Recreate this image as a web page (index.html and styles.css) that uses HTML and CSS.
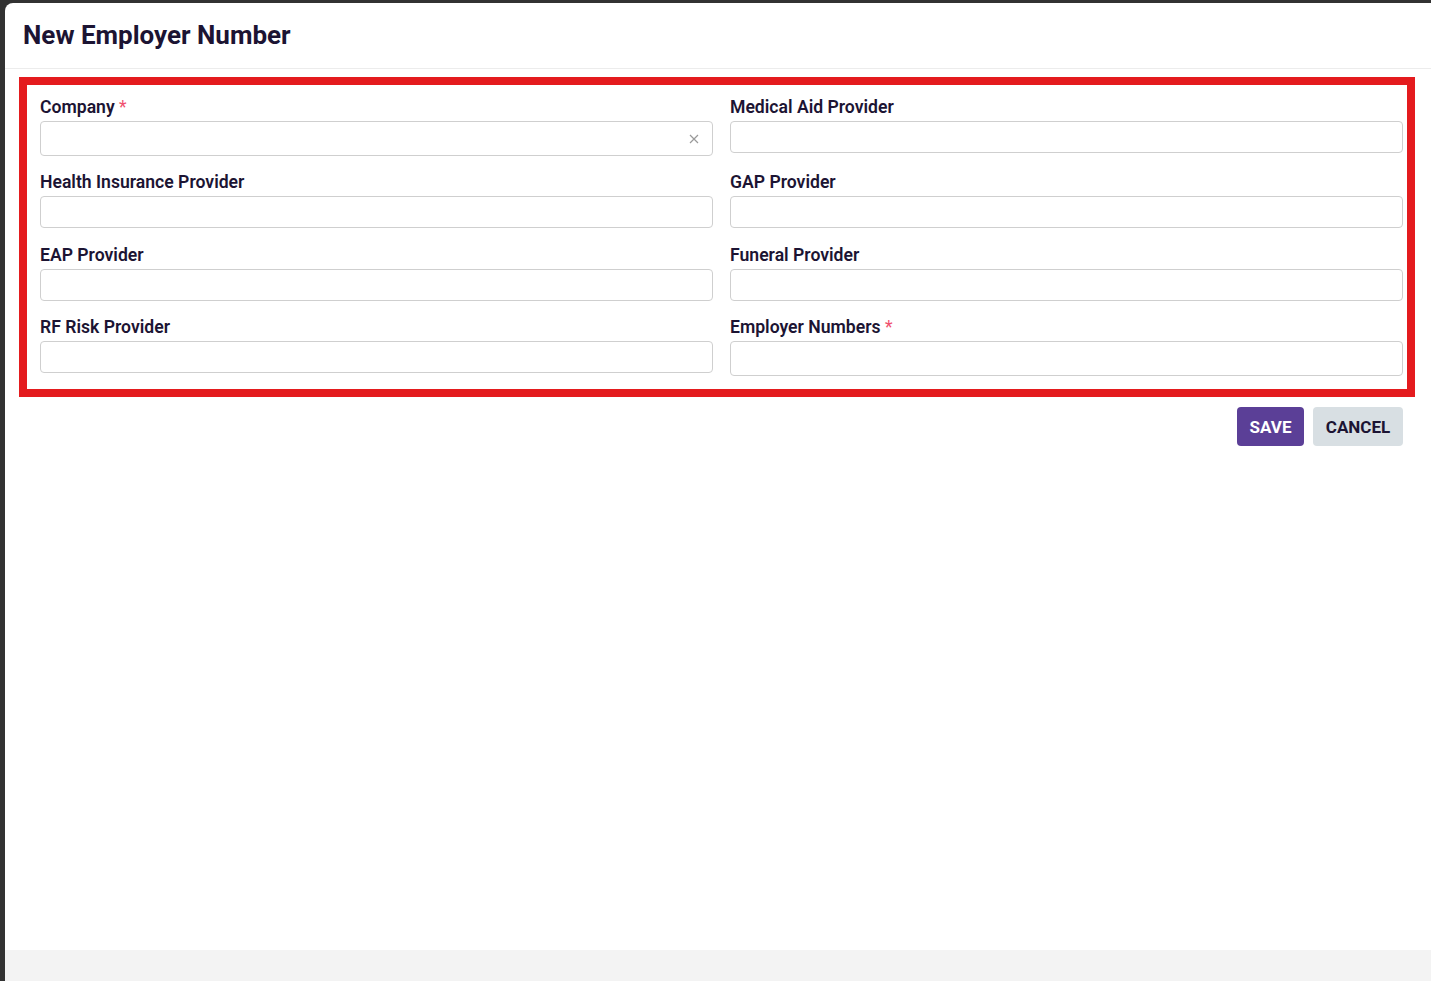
FILE: index.html
```html
<!DOCTYPE html>
<html>
<head>
<meta charset="utf-8">
<link rel="stylesheet" href="styles.css">
</head>
<body>
<div class="dialog">
  <div class="dialog-header">
    <h1 class="title">New Employer Number</h1>
  </div>
  <div class="dialog-body">
    <div class="highlight">
      <div class="form-grid">
        <div class="field">
          <label class="label">Company <span class="req">*</span></label>
          <div class="input select">
            <svg class="clear" width="10" height="10" viewBox="0 0 10 10"><path d="M1 1L9 9M9 1L1 9" stroke="#9a9a9a" stroke-width="1.2" fill="none"/></svg>
          </div>
        </div>
        <div class="field">
          <label class="label">Medical Aid Provider</label>
          <div class="input"></div>
        </div>
        <div class="field">
          <label class="label">Health Insurance Provider</label>
          <div class="input"></div>
        </div>
        <div class="field">
          <label class="label">GAP Provider</label>
          <div class="input"></div>
        </div>
        <div class="field row-3">
          <label class="label">EAP Provider</label>
          <div class="input"></div>
        </div>
        <div class="field row-3">
          <label class="label">Funeral Provider</label>
          <div class="input"></div>
        </div>
        <div class="field">
          <label class="label">RF Risk Provider</label>
          <div class="input"></div>
        </div>
        <div class="field">
          <label class="label">Employer Numbers <span class="req">*</span></label>
          <div class="input tall"></div>
        </div>
      </div>
    </div>
    <div class="actions">
      <button class="btn btn-save">SAVE</button>
      <button class="btn btn-cancel">CANCEL</button>
    </div>
  </div>
  <div class="dialog-footer"></div>
</div>
</body>
</html>
```
FILE: styles.css
```css
* { box-sizing: border-box; }
html, body {
  margin: 0;
  padding: 0;
  height: 100%;
  overflow: hidden;
}
body {
  background: #323232;
  font-family: Roboto, "Liberation Sans", Arial, sans-serif;
  color: #1c1433;
}
.dialog {
  margin: 3px 0 0 5px;
  height: calc(100vh - 3px);
  width: 1426px;
  background: #fff;
  border-top-left-radius: 8px;
  display: flex;
  flex-direction: column;
}
.dialog-header {
  height: 66px;
  border-bottom: 1px solid #ececec;
  padding: 0 0 0 18px;
  display: flex;
  align-items: center;
}
.title {
  margin: 0;
  font-size: 26px;
  font-weight: 700;
  color: #1c1433;
  line-height: 30px;
  padding-bottom: 1px;
}
.dialog-body {
  flex: 1;
  padding: 8px 16px 0 14px;
}
.highlight {
  border: 8px solid #e41b1e;
  padding: 11px 4px 13px 13px;
}
.form-grid {
  display: grid;
  grid-template-columns: 1fr 1fr;
  column-gap: 17px;
  row-gap: 15px;
  align-items: start;
}
.field {
  display: flex;
  flex-direction: column;
}
.field.row-3 {
  padding-top: 1px;
}
.label {
  font-size: 17.6px;
  font-weight: 600;
  line-height: 23px;
  margin-bottom: 2px;
  color: #1c1433;
}
.req {
  color: #f0506e;
  font-weight: 400;
}
.input {
  height: 32px;
  border: 1px solid #cfcfcf;
  border-radius: 4px;
  background: #fff;
  position: relative;
}
.input.select, .input.tall {
  height: 35px;
}
.clear {
  position: absolute;
  right: 13px;
  top: 12px;
}
.actions {
  display: flex;
  justify-content: flex-end;
  gap: 9px;
  margin-top: 10px;
  padding-right: 12px;
}
.btn {
  height: 39px;
  border: none;
  border-radius: 4px;
  font-family: Roboto, "Liberation Sans", Arial, sans-serif;
  font-size: 17px;
  font-weight: 700;
  padding: 0;
  cursor: pointer;
}
.btn-save {
  background: #5b3f97;
  color: #fff;
  width: 67px;
}
.btn-cancel {
  background: #d8dfe3;
  color: #1c1433;
  width: 90px;
}
.dialog-footer {
  height: 31px;
  background: #f3f3f3;
}
```
